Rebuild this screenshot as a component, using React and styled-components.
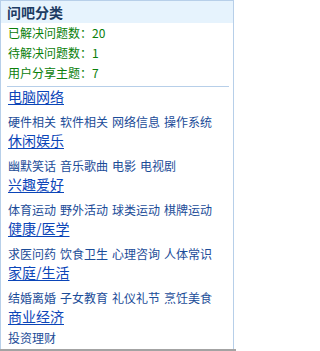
import React from "react"
import styled, { createGlobalStyle } from "styled-components"

const GlobalStyle = createGlobalStyle`
  body {
    margin: 0;
    background: #fff;
    font-family: "Noto Sans CJK SC", "Liberation Sans", sans-serif;
  }
`

const Panel = styled.section`
  width: 234px;
  box-sizing: border-box;
  border: 1px solid #b7cfe9;
  border-bottom: none;
  padding-bottom: 2px;
`

const Header = styled.h3`
  margin: 0;
  height: 22px;
  padding-left: 6px;
  background: #e6f3fd;
  color: #1d3c63;
  font-size: 14px;
  font-weight: bold;
  line-height: 22px;
`

const Stats = styled.ul`
  list-style: none;
  margin: 0;
  padding: 0 7px;
`

const Stat = styled.li`
  color: #0a800a;
  font-size: 12px;
  line-height: 20px;
  white-space: nowrap;
`

const Divider = styled.hr`
  margin: 3px 4px 0 6px;
  border: none;
  border-top: 1px solid #b7cfe9;
  height: 0;
`

const Category = styled.div`
  display: flex;
  flex-direction: column;
  align-items: flex-start;
  padding-left: 7px;
`

const CategoryLink = styled.a`
  color: #0b45b8;
  font-size: 14px;
  line-height: 18px;
  text-decoration: underline;
  text-underline-offset: 2px;
`

const SubList = styled.div`
  display: flex;
  gap: 4px;
  margin-top: ${props => (props.$tight ? "4px" : "8px")};
  font-size: 12px;
  line-height: 18px;
  white-space: nowrap;
`

const SubLink = styled.a`
  color: #1b4c98;
  text-decoration: none;
`

const Ground = styled.div`
  width: 236px;
  border-top: 2px solid #a3a3a3;
`

const stats = [
  ["已解决问题数：", 20],
  ["待解决问题数：", 1],
  ["用户分享主题：", 7]
]

const categories = [
  { name: "电脑网络", items: ["硬件相关", "软件相关", "网络信息", "操作系统"] },
  { name: "休闲娱乐", items: ["幽默笑话", "音乐歌曲", "电影", "电视剧"] },
  { name: "兴趣爱好", items: ["体育运动", "野外活动", "球类运动", "棋牌运动"] },
  { name: "健康/医学", items: ["求医问药", "饮食卫生", "心理咨询", "人体常识"] },
  { name: "家庭/生活", items: ["结婚离婚", "子女教育", "礼仪礼节", "烹饪美食"] },
  { name: "商业经济", items: ["投资理财"] }
]

export default function App () {
  return (
    <>
      <GlobalStyle />
      <Panel>
        <Header>问吧分类</Header>
        <Stats>
          {stats.map(([label, count]) => (
            <Stat key={label}>{label}{count}</Stat>
          ))}
        </Stats>
        <Divider />
        {categories.map((cat, i) => (
          <Category key={cat.name}>
            <CategoryLink href="#">{cat.name}</CategoryLink>
            <SubList $tight={i === categories.length - 1}>
              {cat.items.map(item => (
                <SubLink key={item} href="#">{item}</SubLink>
              ))}
            </SubList>
          </Category>
        ))}
      </Panel>
      <Ground />
    </>
  )
}
